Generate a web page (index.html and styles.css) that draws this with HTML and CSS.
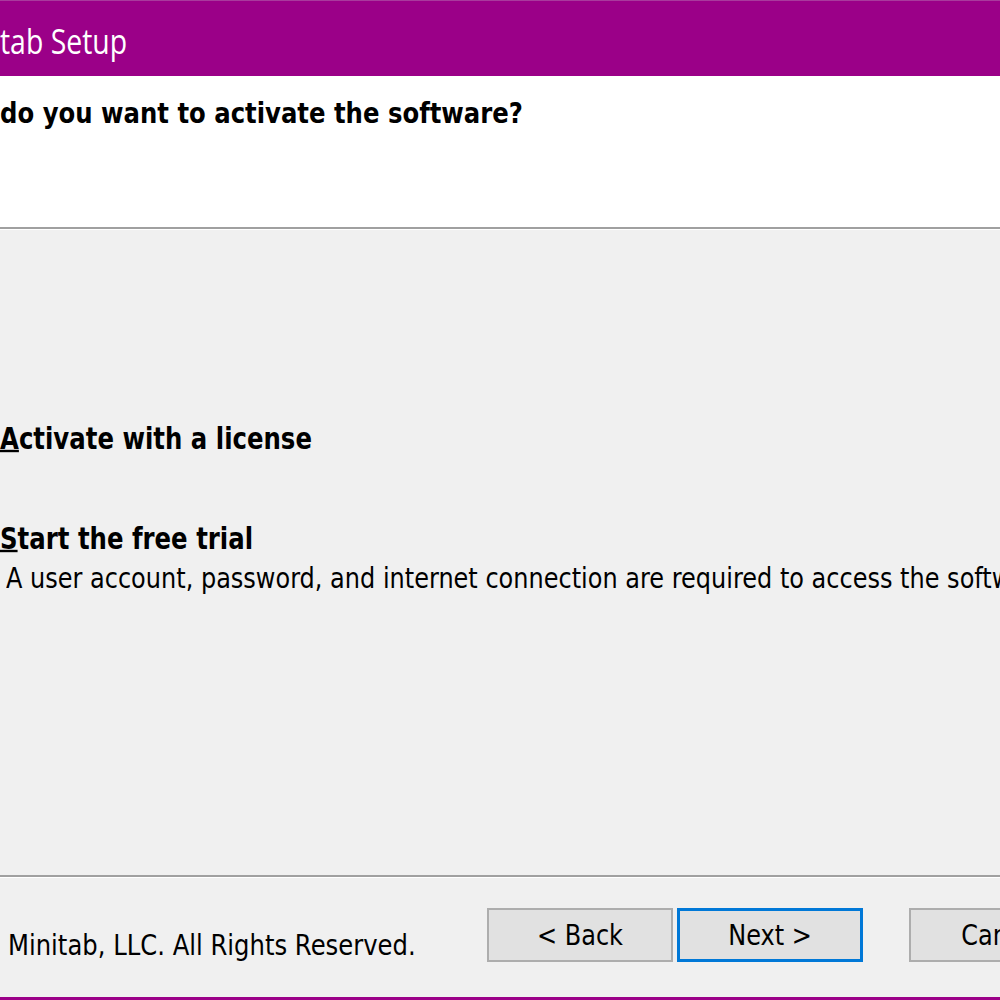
FILE: index.html
```html
<!DOCTYPE html>
<html lang="en">
<head>
<meta charset="utf-8">
<title>Minitab Setup</title>
<link rel="stylesheet" href="styles.css">
</head>
<body>
<div class="window">
  <div class="titlebar"><span class="tx title">tab Setup</span></div>
  <div class="header"><span class="tx heading">do you want to activate the software?</span></div>
  <div class="content">
    <div class="option"><span class="tx strong"><span class="mn">A</span>ctivate with a license</span></div>
    <div class="option second"><span class="tx strong"><span class="mn">S</span>tart the free trial</span></div>
    <div class="note"><span class="tx">A user account, password, and internet connection are required to access the software.</span></div>
  </div>
  <div class="footer">
    <div class="copy"><span class="tx">Minitab, LLC. All Rights Reserved.</span></div>
    <div class="buttons">
      <button class="btn"><span class="tx">&lt; Back</span></button>
      <button class="btn default"><span class="tx">Next &gt;</span></button>
      <button class="btn cancel"><span class="tx">Cancel</span></button>
    </div>
  </div>
</div>
</body>
</html>
```
FILE: styles.css
```css
html, body {
  margin: 0;
  padding: 0;
  background: #f0f0f0;
}

.window {
  width: 1000px;
  height: 1000px;
  overflow: hidden;
  background: #f0f0f0;
  display: flex;
  flex-direction: column;
  font-family: "DejaVu Sans", Verdana, sans-serif;
  font-size: 24px;
  color: #000;
  white-space: nowrap;
}

.tx {
  display: inline-block;
  line-height: 28px;
  transform: scaleY(1.2);
}

.titlebar {
  flex: 0 0 76px;
  box-sizing: border-box;
  background: #9b0088;
  border-top: 1px solid #a93a9d;
  padding-top: 21px;
  color: #fff;
  font-family: "Open Sans", "Noto Sans", sans-serif;
  font-size: 28.4px;
}

.title {
  line-height: 38px;
}

.header {
  flex: 0 0 153px;
  box-sizing: border-box;
  background: #fff;
  padding-top: 23px;
  border-bottom: 2px solid #a0a0a0;
}

.heading {
  font-weight: bold;
  font-size: 24.35px;
}

.strong {
  font-weight: bold;
  font-size: 24.4px;
}

.mn {
  text-decoration: underline;
  text-decoration-thickness: 2px;
}

.content {
  flex: 1;
  padding-top: 195px;
  border-top: 1px solid #fff;
}

.option.second {
  margin-top: 72px;
}

.note {
  margin-top: 11px;
  padding-left: 6px;
}

.footer {
  flex: 0 0 125px;
  box-sizing: border-box;
  border-top: 2px solid #a0a0a0;
  border-bottom: 3px solid #9b0088;
  box-shadow: inset 0 1px 0 #fff;
  padding-top: 31px;
  display: flex;
  align-items: flex-start;
}

.copy {
  flex: 0 0 487px;
  box-sizing: border-box;
  padding-left: 8px;
  margin-top: 22px;
  font-size: 24.3px;
}

.buttons {
  display: flex;
  flex-shrink: 0;
}

.btn {
  flex: 0 0 186px;
  width: 186px;
  height: 54px;
  box-sizing: border-box;
  margin: 0;
  padding: 0;
  background: #e1e1e1;
  border: 2px solid #adadad;
  font: inherit;
  color: #000;
  text-align: center;
}

.btn.default {
  border: 3px solid #0078d7;
  margin-left: 4px;
}

.btn.cancel {
  margin-left: 46px;
}
```
